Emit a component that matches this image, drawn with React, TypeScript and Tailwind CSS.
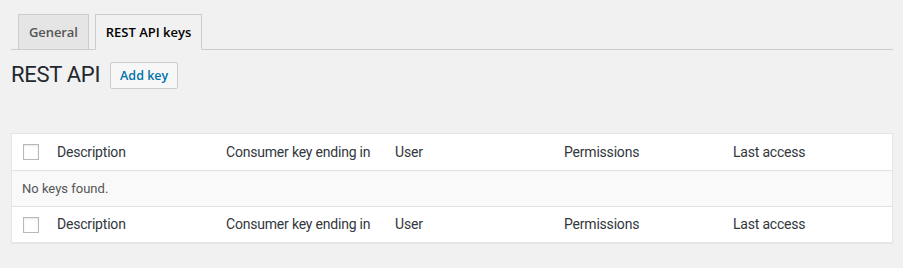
import React from "react";

const font = { fontFamily: "'Segoe UI', Roboto, 'Noto Sans', sans-serif" };
const semi = { fontFamily: "'Open Sans', Roboto, sans-serif" };

function Checkbox() {
  return (
    <span className="block w-[16px] h-[16px] border border-[#b4b9be] bg-white shadow-[inset_0_1px_2px_rgba(0,0,0,0.1)]" />
  );
}

function HeadRow({ h }: { h: string }) {
  const cols = ["Description", "Consumer key ending in", "User", "Permissions", "Last access"];
  return (
    <div className={`grid grid-cols-[35px_repeat(5,minmax(0,1fr))] ${h} items-center text-[14px] text-[#32373c] tracking-[-0.2px]`}>
      <div className="pl-[11px] flex items-center">
        <Checkbox />
      </div>
      {cols.map((c) => (
        <div key={c} className="px-[10px] whitespace-nowrap">
          {c}
        </div>
      ))}
    </div>
  );
}

export default function App() {
  return (
    <div className="w-full h-[268px] bg-[#f1f1f1] pl-[11px] pr-[10px]" style={font}>
      <div className="pt-[14px] border-b border-[#cccccc] flex items-end">
        <div
          className="ml-[7px] -mb-px h-[36px] px-[10px] border border-[#cccccc] bg-[#e5e5e5] text-[#555] text-[13px] font-semibold leading-[34px] tracking-[-0.1px]"
          style={semi}
        >
          General
        </div>
        <div
          className="ml-[6px] -mb-px h-[36px] px-[10px] border border-[#cccccc] border-b-[#f1f1f1] bg-[#f1f1f1] text-black text-[13px] font-semibold leading-[34px]"
          style={semi}
        >
          REST API keys
        </div>
      </div>
      <div className="pt-[10px] flex items-center h-[40px]">
        <h1 className="text-[22px] leading-[30px] text-[#23282d] font-normal tracking-[-0.3px]">REST API</h1>
        <span
          className="ml-[10px] h-[27px] px-[9px] border border-[#cccccc] bg-[#f7f7f7] rounded-[2px] text-[12.5px] font-semibold text-[#0073aa] leading-[25px]"
          style={semi}
        >
          Add key
        </span>
      </div>
      <div className="mt-[43px] border border-[#e5e5e5] bg-white shadow-[0_1px_1px_rgba(0,0,0,0.04)]">
        <HeadRow h="h-[36px]" />
        <div className="border-t border-[#e1e1e1] bg-[#f9f9f9] h-[36px] flex items-center pl-[10px] text-[13px] text-[#555]">
          No keys found.
        </div>
        <div className="border-t border-[#e1e1e1]">
          <HeadRow h="h-[35px]" />
        </div>
      </div>
    </div>
  );
}
